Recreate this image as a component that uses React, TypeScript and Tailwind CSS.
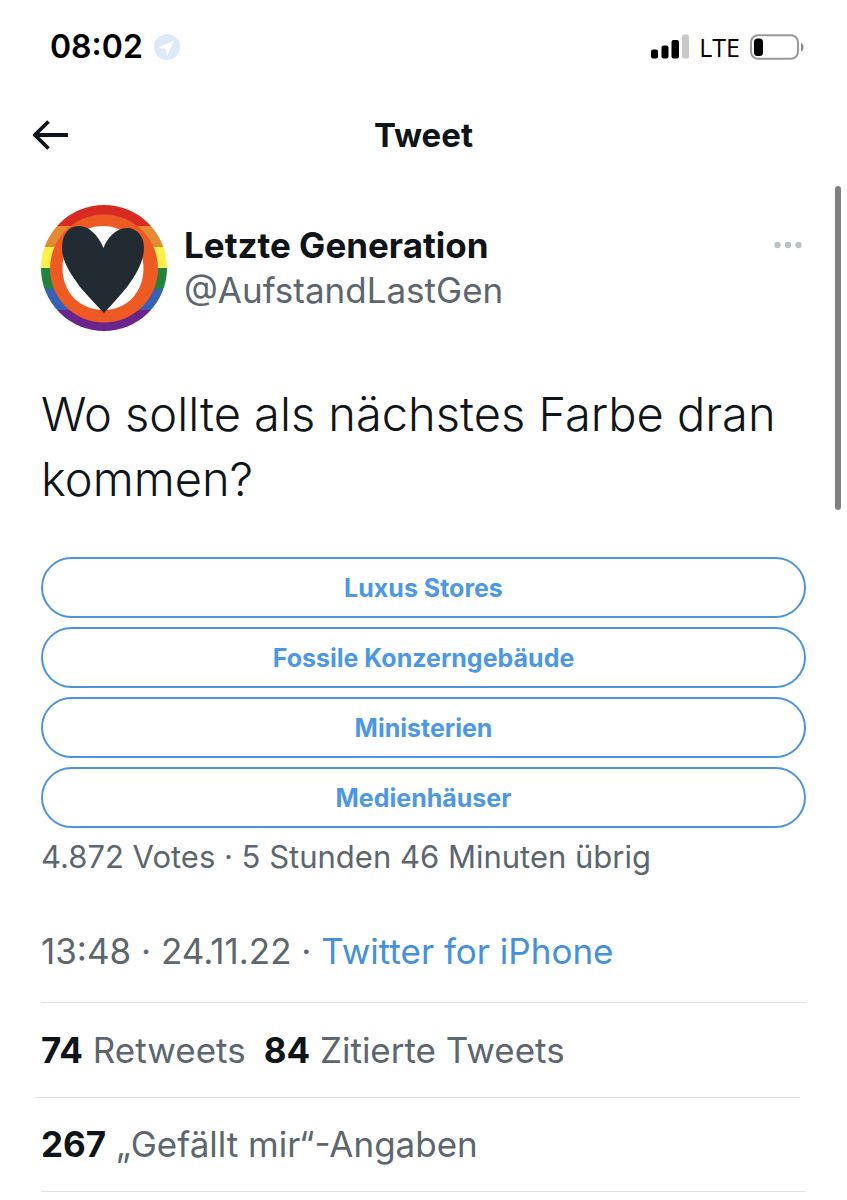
import React, { useState } from 'react';

const OPTIONS = ['Luxus Stores', 'Fossile Konzerngebäude', 'Ministerien', 'Medienhäuser'];

const StatusBar: React.FC = () => (
  <div className="flex h-[93px] items-center justify-between pl-[50px] pr-[43px] text-black">
    <div className="flex items-center gap-[11px]">
      <span className="text-[32px] leading-10 font-semibold">08:02</span>
      <svg className="h-[26px] w-[26px]" viewBox="0 0 26 26" aria-hidden="true">
        <circle cx="13" cy="13" r="13" fill="#dce9f9" />
        <path d="M19.8 6.2 5.6 13c-.8.4-.6 1.2.2 1.3l6 .5.8 6c.1.8 1 .9 1.3.1z" fill="#fff" />
      </svg>
    </div>
    <div className="flex items-center gap-[10px]">
      <svg className="h-[25px] w-[38px]" viewBox="0 0 38 25" aria-hidden="true">
        <rect x="0" y="15.5" width="7" height="9" rx="2" fill="#000" />
        <rect x="10.5" y="11.5" width="7" height="13" rx="2" fill="#000" />
        <rect x="20.5" y="6" width="7.5" height="18.5" rx="2" fill="#000" />
        <rect x="31" y="0.5" width="7" height="24" rx="2" fill="#c8c8c8" />
      </svg>
      <span className="font-['Open_Sans','Inter',sans-serif] text-[25px] leading-8 font-medium">LTE</span>
      <svg className="h-[26px] w-[54px]" viewBox="0 0 54 26" aria-hidden="true">
        <rect x="1" y="1.2" width="47" height="23.6" rx="7" fill="none" stroke="#999" strokeWidth="2" />
        <rect x="4" y="4.5" width="9" height="17.5" rx="3.5" fill="#000" />
        <path d="M51 9c3.3 1 3.3 7.5 0 8.500z" fill="#888" />
      </svg>
    </div>
  </div>
);

const Avatar: React.FC = () => (
  <svg className="h-[126px] w-[126px] shrink-0" viewBox="0 0 126 126" role="img" aria-label="Letzte Generation">
    <defs>
      <clipPath id="avatar-clip">
        <circle cx="63" cy="63" r="63" />
      </clipPath>
    </defs>
    <g clipPath="url(#avatar-clip)">
      <rect width="126" height="21" fill="#d62a22" />
      <rect y="21" width="126" height="21" fill="#e38a32" />
      <rect y="42" width="126" height="21" fill="#fdf04a" />
      <rect y="63" width="126" height="21" fill="#23823a" />
      <rect y="84" width="126" height="21" fill="#3560b4" />
      <rect y="105" width="126" height="21" fill="#6b248c" />
      <circle cx="63" cy="63.5" r="54" fill="#ee5a24" />
      <path d="M62 21C85 21 102 39 102.5 63C102.5 88 85 105 63 105C39 105 21.5 88 21.5 63C21.5 39 39 21 62 21Z" fill="#fff" />
      <path
        d="M62.5 43C57 30 48 21 38 21C27 21 21 30 21 43C21 57 30 69 39 82C48 92 55 100 63 108C71 99 79 91 86 82C95 70 103 56 103 43C103 31 96 23 86 23C75 23 66 33 62.5 43Z"
        fill="#222b31"
      />
    </g>
  </svg>
);

const App: React.FC = () => {
  const [vote, setVote] = useState<string | null>(null);

  return (
    <div className="relative min-h-screen bg-white font-['Inter','Liberation_Sans',sans-serif] text-[#0f1419]">
      <StatusBar />

      <header className="grid h-[84px] grid-cols-[1fr_auto_1fr] items-center px-8">
        <button type="button" aria-label="Zurück" className="justify-self-start">
          <svg className="h-[30px] w-[36px]" viewBox="0 0 36 30" fill="none" stroke="#0f1419" strokeWidth="3.8" aria-hidden="true">
            <path d="M2.5 15H36M16.5 1.5 2.8 15l13.7 13.5" strokeLinejoin="round" />
          </svg>
        </button>
        <h1 className="text-[33px] leading-10 font-bold">Tweet</h1>
      </header>

      <main className="px-[41px] pt-7">
        <div className="flex items-start gap-[17px]">
          <Avatar />
          <div className="min-w-0 flex-1 pt-[18px]">
            <p className="text-[35px] leading-[45px] font-bold">Letzte Generation</p>
            <p className="text-[35px] leading-[45px] text-[#5b6670]">@AufstandLastGen</p>
          </div>
          <button type="button" aria-label="Mehr" className="mt-[36px] mr-1">
            <svg className="h-2 w-[28px]" viewBox="0 0 28 8" fill="#b9c3cb" aria-hidden="true">
              <circle cx="3.5" cy="4" r="3.2" />
              <circle cx="14" cy="4" r="3.2" />
              <circle cx="24.5" cy="4" r="3.2" />
            </svg>
          </button>
        </div>

        <p className="mt-[50px] text-[47px] leading-[65px] font-[350]">Wo sollte als nächstes Farbe dran kommen?</p>

        <div className="mt-[46px] flex flex-col gap-[9px]">
          {OPTIONS.map(option => (
            <button
              key={option}
              type="button"
              aria-pressed={vote === option}
              onClick={() => setVote(option)}
              className="h-[61px] rounded-full border-2 border-[#4a94dc] text-[25px] leading-8 font-bold text-[#4c98e4]"
            >
              {option}
            </button>
          ))}
        </div>
        <p className="mt-[9px] text-[31px] leading-10 text-[#5b6670]">4.872 Votes · 5 Stunden 46 Minuten übrig</p>

        <p className="mt-[52px] text-[35px] leading-[45px] text-[#5b6670]">
          13:48 · 24.11.22 · <a href="#" className="text-[#4490da]">Twitter for iPhone</a>
        </p>

        <hr className="mt-7 border-[#dfe3e6]" />
        <div className="flex h-[94px] items-center gap-[18px] text-[35px] leading-[45px] text-[#5b6670]">
          <a href="#"><strong className="text-[#0f1419]">74</strong> Retweets</a>
          <a href="#"><strong className="text-[#0f1419]">84</strong> Zitierte Tweets</a>
        </div>
        <hr className="mr-1.5 -ml-1.5 border-[#dfe3e6]" />
        <div className="flex h-[93px] items-center text-[35px] leading-[45px] text-[#5b6670]">
          <a href="#"><strong className="text-[#0f1419]">267</strong> „Gefällt mir“-Angaben</a>
        </div>
        <hr className="border-[#dfe3e6]" />
      </main>

      {/* scroll indicator */}
      <div className="absolute top-[186px] right-[6px] h-[324px] w-[6px] rounded-full bg-[#808080]" />
    </div>
  );
};

export default App;
